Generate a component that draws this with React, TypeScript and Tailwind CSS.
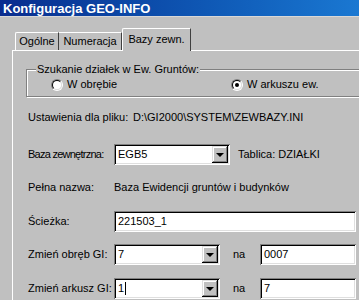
import React from "react"

const sunken =
  "shadow-[inset_1px_1px_#808080,inset_-1px_-1px_#ffffff,inset_2px_2px_#000000,inset_-2px_-2px_#dfdfdf]"
const raised =
  "shadow-[inset_-1px_-1px_#000000,inset_1px_1px_#dfdfdf,inset_-2px_-2px_#808080,inset_2px_2px_#ffffff]"

function DropButton() {
  return (
    <div className={`w-[16px] h-[17px] bg-[#c0c0c0] flex items-center justify-center ${raised}`}>
      <div className="w-0 h-0 mt-[1px] border-l-[4px] border-r-[4px] border-t-[4px] border-l-transparent border-r-transparent border-t-black" />
    </div>
  )
}

function Combo({ value, width, cursor }: { value: string; width: string; cursor?: boolean }) {
  return (
    <div className={`${width} shrink-0 h-[21px] bg-white flex items-center p-[2px] ${sunken}`}>
      <div className="flex-1 flex items-center pl-[2px]">
        {value}
        {cursor && <span className="inline-block w-px h-[13px] bg-black ml-px" />}
      </div>
      <DropButton />
    </div>
  )
}

function Field({ value, width }: { value: string; width: string }) {
  return (
    <div className={`${width} shrink-0 h-[21px] bg-white flex items-center px-[4px] ${sunken}`}>{value}</div>
  )
}

function Radio({ checked, label }: { checked?: boolean; label: string }) {
  return (
    <div className="flex items-center gap-[4px]">
      <span className="w-[12px] h-[12px] rounded-full border border-t-[#808080] border-l-[#808080] border-r-white border-b-white flex">
        <span className="flex-1 rounded-full bg-white border border-t-black border-l-black border-r-[#dfdfdf] border-b-[#dfdfdf] flex items-center justify-center">
          {checked && <span className="w-[4px] h-[4px] rounded-full bg-black" />}
        </span>
      </span>
      <span>{label}</span>
    </div>
  )
}

export default function App() {
  return (
    <div className="w-[359px] h-[300px] overflow-hidden bg-[#c0c0c0] text-[11px] leading-[13px] text-black whitespace-nowrap font-['Liberation_Sans',Arial,sans-serif]">
      {/* Title bar */}
      <div className="h-[16px] bg-gradient-to-r from-[#0a2c8e] to-[#1a78d2] flex items-center pl-[3px] text-white font-bold text-[13px]">
        Konfiguracja GEO-INFO
      </div>
      <div className="h-px bg-[#d8d8d8]" />

      {/* Tabs */}
      <div className="mt-[11px] ml-[13px] flex items-end h-[22px]">
        <div className="ml-[2px] w-[44px] h-[18px] flex items-center justify-center border-t border-l border-white border-r border-r-[#404040] rounded-tl-[2px]">
          Ogólne
        </div>
        <div className="w-[63px] h-[18px] flex items-center justify-center border-t border-white border-r border-r-[#404040]">
          Numeracja
        </div>
        <div className="relative z-10 -mb-px w-[69px] h-[23px] bg-[#c0c0c0] flex items-center justify-center pb-[2px] border-t border-l border-white border-r border-r-[#404040] rounded-tl-[2px]">
          Bazy zewn.
        </div>
      </div>

      {/* Panel */}
      <div className="ml-[12px] h-[260px] border-t border-l border-white pl-[15px]">
        {/* Group box */}
        <div className="relative mt-[18px] -ml-[2px] w-[345px] h-[28px] border border-[#808080] shadow-[inset_1px_1px_#ffffff,1px_1px_#ffffff]">
          <span className="absolute -top-[7px] left-[9px] bg-[#c0c0c0] px-[1px]">
            Szukanie działek w Ew. Gruntów:
          </span>
          <div className="flex items-center h-full pl-[24px] pt-[3px]">
            <div className="w-[180px]">
              <Radio label="W obrębie" />
            </div>
            <Radio checked label="W arkuszu ew." />
          </div>
        </div>

        <div className="mt-[13px] flex items-center h-[14px]">
          <span className="w-[105px] shrink-0">Ustawienia dla pliku:</span>
          <span>D:\GI2000\SYSTEM\ZEWBAZY.INI</span>
        </div>

        <div className="mt-[20px] flex items-center h-[21px]">
          <span className="w-[86px] shrink-0 tracking-[-0.75px]">Baza zewnętrzna:</span>
          <Combo value="EGB5" width="w-[116px]" />
          <span className="ml-[8px]">Tablica: DZIAŁKI</span>
        </div>

        <div className="mt-[15px] flex items-center h-[14px]">
          <span className="w-[86px] shrink-0">Pełna nazwa:</span>
          <span>Baza Ewidencji gruntów i budynków</span>
        </div>

        <div className="mt-[17px] flex items-center h-[21px]">
          <span className="w-[86px] shrink-0">Ścieżka:</span>
          <Field value="221503_1" width="w-[242px]" />
        </div>

        <div className="mt-[12px] flex items-center h-[21px]">
          <span className="w-[86px] shrink-0">Zmień obręb GI:</span>
          <Combo value="7" width="w-[106px]" />
          <span className="ml-[13px] w-[27px] shrink-0">na</span>
          <Field value="0007" width="w-[96px]" />
        </div>

        <div className="mt-[13px] flex items-center h-[21px]">
          <span className="w-[86px] shrink-0">Zmień arkusz GI:</span>
          <Combo value="1" width="w-[106px]" cursor />
          <span className="ml-[13px] w-[27px] shrink-0">na</span>
          <Field value="7" width="w-[96px]" />
        </div>
      </div>
    </div>
  )
}
